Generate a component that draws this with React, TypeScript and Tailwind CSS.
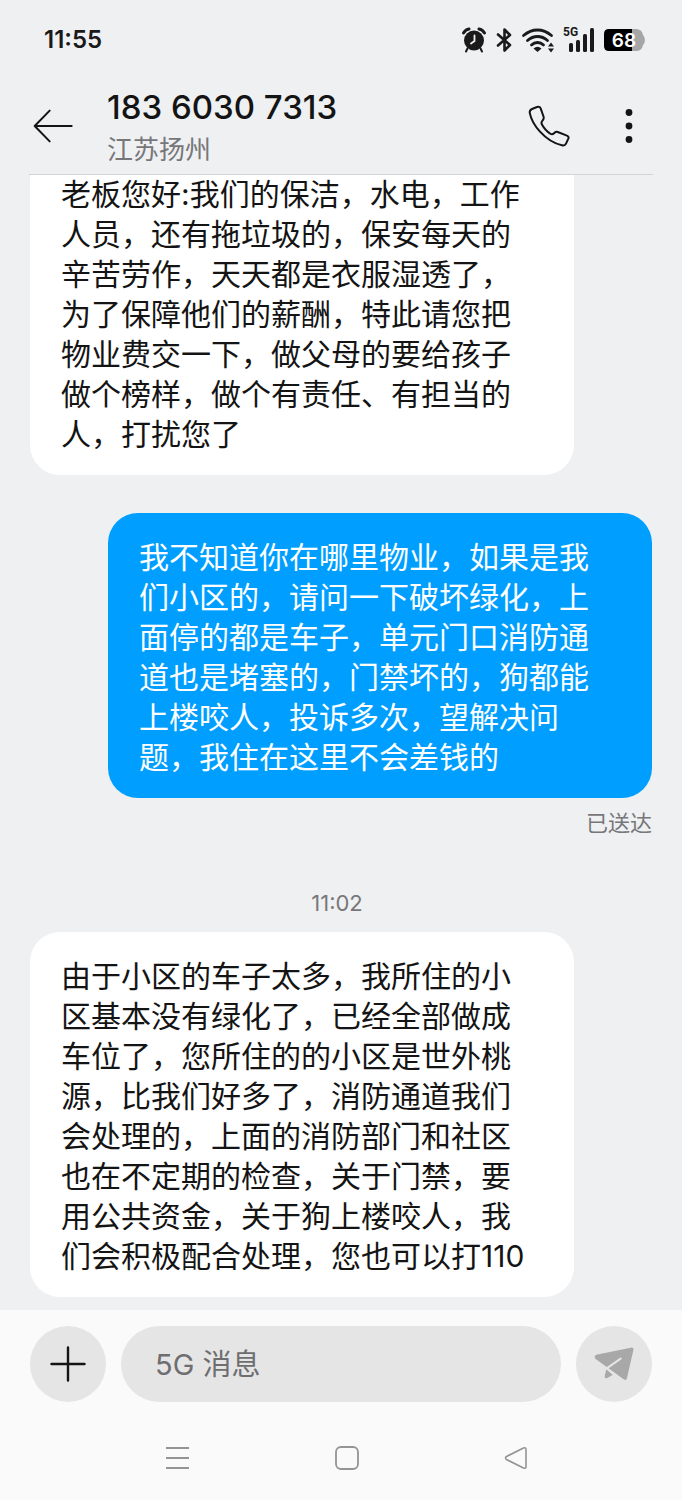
import React from "react";

interface Message {
  id: number;
  mine: boolean;
  text: string;
  time?: string;
  status?: string;
}

const messages: Message[] = [
  {
    id: 1,
    mine: false,
    text: "老板您好:我们的保洁，水电，工作人员，还有拖垃圾的，保安每天的辛苦劳作，天天都是衣服湿透了，为了保障他们的薪酬，特此请您把物业费交一下，做父母的要给孩子做个榜样，做个有责任、有担当的人，打扰您了",
  },
  {
    id: 2,
    mine: true,
    text: "我不知道你在哪里物业，如果是我们小区的，请问一下破坏绿化，上面停的都是车子，单元门口消防通道也是堵塞的，门禁坏的，狗都能上楼咬人，投诉多次，望解决问题，我住在这里不会差钱的",
    status: "已送达",
  },
  {
    id: 3,
    mine: false,
    time: "11:02",
    text: "由于小区的车子太多，我所住的小区基本没有绿化了，已经全部做成车位了，您所住的的小区是世外桃源，比我们好多了，消防通道我们会处理的，上面的消防部门和社区也在不定期的检查，关于门禁，要用公共资金，关于狗上楼咬人，我们会积极配合处理，您也可以打110",
  },
];

const StatusBar: React.FC = () => (
  <div className="flex h-20 items-center justify-between pl-11 pr-9 text-[#1a1a1a]">
    <span className="text-2xl font-semibold">11:55</span>
    <div className="flex items-center gap-2">
      <svg width="26" height="26" viewBox="0 0 26 26" fill="none" stroke="currentColor" aria-label="闹钟">
        <circle cx="13" cy="13.500" r="10" fill="currentColor" stroke="none" />
        <path d="M2.500 6Q4.500 2.500 8 2M23.500 6Q21.500 2.500 18 2" strokeWidth="3" strokeLinecap="round" />
        <path d="M6.500 21.500L5 24.500M19.500 21.500L21 24.500" strokeWidth="2" strokeLinecap="round" />
        <path d="M13.500 8.500V14L10 16.500" stroke="#eff0f2" strokeWidth="1.800" strokeLinecap="round" />
      </svg>
      <svg width="18" height="26" viewBox="0 0 18 26" fill="none" stroke="currentColor" strokeWidth="2.600" strokeLinejoin="round" strokeLinecap="round" aria-label="蓝牙">
        <path d="M3 7.500L15 18L9.500 23.500V2.500L15 8L3 18.500" />
      </svg>
      <svg width="34" height="26" viewBox="0 0 34 26" fill="none" stroke="currentColor" strokeWidth="2.800" strokeLinecap="round" aria-label="无线网络">
        <path d="M2.500 8.500Q9 3 16.500 3T30.500 8.500" />
        <path d="M6.500 13.500Q11 9.500 16.500 9.500T26.500 13.500" />
        <path d="M10.500 18Q13 15.500 16.500 15.500T22.500 18" />
        <path d="M12.500 21.500Q16.500 18 20.500 21.500L16.500 25Z" fill="currentColor" stroke="none" />
        <path d="M27 19.500L30 15.500L33 19.500ZM27 21.500L30 25.500L33 21.500Z" fill="currentColor" stroke="none" />
      </svg>
      <svg width="32" height="28" viewBox="0 0 32 28" fill="currentColor" aria-label="5G 信号">
        <text x="0" y="10" fontSize="12" className="font-['Roboto',sans-serif] font-bold">5G</text>
        <rect x="6" y="17" width="4" height="9" rx="1.500" />
        <rect x="13" y="14" width="4" height="12" rx="1.500" />
        <rect x="20" y="8" width="4" height="18" rx="1.500" />
        <rect x="27" y="2" width="4" height="24" rx="1.500" />
      </svg>
      <svg width="43" height="24" viewBox="0 0 43 24" aria-label="电量 68%">
        <path d="M6 1H29V23H6Q1 23 1 18V6Q1 1 6 1Z" fill="#000" />
        <path d="M29 1H33Q39 1 40 7Q42 9 42 12T40 17Q39 23 33 23H29Z" fill="#a6a6a6" />
        <text x="21" y="19" textAnchor="middle" fontSize="19" fontWeight="600" fill="#fff">68</text>
      </svg>
    </div>
  </div>
);

const ChatHeader: React.FC = () => (
  <header className="mx-[29px] flex h-[95px] items-center border-b border-[#d3d4d6] pb-[3px] text-[#141414]">
    <button type="button" aria-label="返回" className="ml-1">
      <svg width="40" height="34" viewBox="100 294 120 102" fill="none" stroke="currentColor" strokeWidth="6" strokeLinecap="round" strokeLinejoin="round">
        <path d="M216 345H105M150 299L105 345L150 391" />
      </svg>
    </button>
    <div className="ml-[34px] flex-1">
      <h1 className="text-[33px] leading-[48px] font-medium">183 6030 7313</h1>
      <p className="text-[26px] leading-[38px] text-[#77777a]">江苏扬州</p>
    </div>
    <button type="button" aria-label="拨打电话">
      <svg width="42" height="42" viewBox="84 72 126 126" fill="none" stroke="currentColor" strokeWidth="6" strokeLinejoin="round">
        <path d="M89 95Q89 87 96 84L111 78Q119 75 122 82L131 108Q132 113 128 118Q123 124 125 129Q134 147 152 159Q157 162 163 156Q168 151 173 153L199 163Q208 166 205 173L198 188Q195 195 186 193Q150 185 120 152Q95 125 89 95Z" />
      </svg>
    </button>
    <button type="button" aria-label="更多" className="ml-[49px] mr-[14px]">
      <svg width="20" height="36" viewBox="0 0 20 36" fill="currentColor">
        <circle cx="10" cy="4.500" r="3.400" />
        <circle cx="10" cy="18" r="3.400" />
        <circle cx="10" cy="31.500" r="3.400" />
      </svg>
    </button>
  </header>
);

const Bubble: React.FC<{ message: Message }> = ({ message }) => {
  const { mine, text, time, status } = message;
  return (
    <div className={mine ? "mt-[38px] flex flex-col items-end" : "flex flex-col items-start"}>
      {time && (
        <time className="mt-[48px] mb-[13px] self-center pr-2 text-[22px] leading-8 text-[#77777a]">{time}</time>
      )}
      <p
        className={
          mine
            ? "w-[88%] max-w-[544px] rounded-[30px] bg-[#009fff] pt-6 pr-9 pb-[21px] pl-[31px] text-[30px] leading-10 text-white"
            : "w-[88%] max-w-[544px] rounded-[30px] bg-white pt-6 pr-9 pb-[21px] pl-[31px] text-[30px] leading-10 text-[#141414]"
        }
      >
        {text}
      </p>
      {status && <span className="mt-[9px] text-[22px] leading-8 text-[#77777a]">{status}</span>}
    </div>
  );
};

const Composer: React.FC = () => (
  <form className="flex items-center gap-[15px] px-[30px] pt-4">
    <button type="button" aria-label="添加" className="flex size-[76px] shrink-0 items-center justify-center rounded-full bg-[#e5e5e5] text-[#141414]">
      <svg width="36" height="36" viewBox="0 0 36 36" stroke="currentColor" strokeWidth="2.400" strokeLinecap="round">
        <path d="M1.500 18H34.500M18 1.500V34.500" />
      </svg>
    </button>
    <input
      type="text"
      aria-label="5G 消息"
      placeholder="5G 消息"
      className="h-[76px] min-w-0 flex-1 rounded-full bg-[#e5e5e5] px-[34px] text-[29px] text-[#141414] outline-none placeholder:text-[#6e6e70]"
    />
    <button type="submit" aria-label="发送" className="flex size-[76px] shrink-0 items-center justify-center rounded-full bg-[#e5e5e5]">
      <svg width="42" height="36" viewBox="760 166 126 108">
        <path d="M770 192L873 171Q883 169 881 179L862 262Q860 271 852 266L768 205Q761 195 770 192Z" fill="#a8a8a8" />
        <path d="M800 236L820 252L803 262Q794 265 795 256Z" fill="#a8a8a8" />
        <path d="M843 204L801 233L828 255" fill="none" stroke="#e5e5e5" strokeWidth="6" strokeLinecap="round" />
      </svg>
    </button>
  </form>
);

const NavBar: React.FC = () => (
  <nav className="flex h-[98px] items-center justify-center gap-[145px] pt-[14px] pl-[11px] text-[#949494]">
    <button type="button" aria-label="最近任务">
      <svg width="24" height="24" viewBox="0 0 24 24" stroke="currentColor" strokeWidth="2">
        <path d="M0 2H23M0 12H23M0 22H23" />
      </svg>
    </button>
    <button type="button" aria-label="主屏幕">
      <svg width="24" height="24" viewBox="0 0 24 24" fill="none" stroke="currentColor" strokeWidth="1.800">
        <rect x="1" y="1" width="22" height="22" rx="5" />
      </svg>
    </button>
    <button type="button" aria-label="返回上一页">
      <svg width="24" height="24" viewBox="0 0 24 24" fill="none" stroke="currentColor" strokeWidth="1.600" strokeLinejoin="round">
        <path d="M2.500 10.500L19.500 2Q22 1 22 3.500V20.500Q22 23 19.500 22L2.500 13.500Q0.500 12 2.500 10.500Z" />
      </svg>
    </button>
  </nav>
);

const App: React.FC = () => {
  return (
    <div className="flex h-screen flex-col bg-[#eff0f2] font-['Inter','Noto_Sans_CJK_SC',sans-serif]">
      <StatusBar />
      <ChatHeader />
      <main className="flex min-h-0 flex-1 flex-col justify-end overflow-hidden px-[30px] pb-[13px]">
        {messages.map((message) => (
          <Bubble key={message.id} message={message} />
        ))}
      </main>
      <footer className="bg-[#fafafa]">
        <Composer />
        <NavBar />
      </footer>
    </div>
  );
};

export default App;
